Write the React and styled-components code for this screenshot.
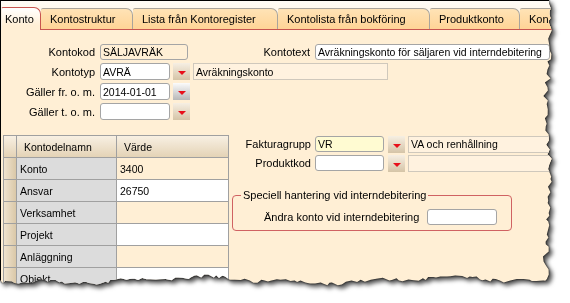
import React from 'react';
import styled, { createGlobalStyle, css } from 'styled-components';

const Global = createGlobalStyle`
  html, body { margin: 0; padding: 0; background: #fff; }
  body { width: 570px; height: 303px; overflow: hidden; font-family: "Liberation Sans", Arial, sans-serif; }
  * { box-sizing: border-box; }
`;

function rng(seed) {
  return () => {
    seed |= 0; seed = (seed + 0x6d2b79f5) | 0;
    let t = Math.imul(seed ^ (seed >>> 15), 1 | seed);
    t = (t + Math.imul(t ^ (t >>> 7), 61 | t)) ^ t;
    return ((t ^ (t >>> 14)) >>> 0) / 4294967296;
  };
}

function tornPolygon() {
  const r = rng(11);
  const pts = ['0px 0px', '549px 0px'];
  let y = 0;
  while (y < 276) {
    y += 2 + r() * 4;
    const x = 546.5 + r() * 4.5 + 1.5 * Math.sin(y / 23) + (r() < 0.12 ? -2.5 : 0);
    pts.push(`${x.toFixed(1)}px ${Math.min(y, 279).toFixed(1)}px`);
  }
  let x = 548;
  while (x > 0) {
    x -= 2 + r() * 5;
    const base = 280 + 2.5 * Math.sin(x / 41) + 1.5 * Math.sin(x / 13 + 1);
    const yy = base + (r() - 0.5) * 3.5;
    pts.push(`${Math.max(x, 0).toFixed(1)}px ${yy.toFixed(1)}px`);
  }
  pts.push('0px 281px');
  return `polygon(${pts.join(', ')})`;
}

const TORN = tornPolygon();

const Shadow = styled.div`
  width: 570px;
  height: 303px;
  filter: drop-shadow(0 0 0.8px rgba(0, 0, 0, 1)) drop-shadow(3px 3px 2px rgba(0, 0, 0, 0.68));
`;

const Window = styled.div`
  width: 570px;
  height: 300px;
  border-left: 1px solid #000;
  border-top: 1px solid #000;
  background: #ffefd5;
  clip-path: ${TORN};
  overflow: hidden;
  font-family: "Liberation Sans", Arial, sans-serif;
  font-size: 11px;
  color: #000;
`;

const TabStrip = styled.div`
  display: flex;
  align-items: flex-end;
  height: 29px;
  border-bottom: 1px solid #c8554f;
  background: linear-gradient(#fffcf6, #feefd8);
`;

const Tab = styled.div`
  flex: none;
  width: ${(p) => p.$w}px;
  height: 21px;
  padding-left: 9px;
  display: flex;
  align-items: center;
  white-space: nowrap;
  overflow: hidden;
  font-size: 11px;
  background: linear-gradient(#ffe3b6, #ffd496);
  border-top: 1px solid #a9a49c;
  border-right: 1px solid #a9a49c;
  border-radius: 2px 7px 0 0;
  ${(p) =>
    p.$active &&
    css`
      height: 23px;
      margin-bottom: -1px;
      padding-left: 3px;
      background: linear-gradient(#ffffff, #ffefd5 80%);
      border-top-color: #c8554f;
      border-right-color: #c8554f;
      border-left: 1px solid #f6eee2;
    `}
`;

const Panel = styled.div`
  padding-top: 14px;
`;

const TopForm = styled.div`
  display: flex;
  flex-direction: column;
  gap: 3px;
`;

const Row = styled.div`
  display: flex;
  align-items: center;
  height: ${(p) => p.$h || 17}px;
  padding-left: ${(p) => p.$pl || 0}px;
`;

const Label = styled.span`
  flex: none;
  width: ${(p) => (p.$w ? `${p.$w}px` : 'auto')};
  margin-right: ${(p) => (p.$gap ?? 5)}px;
  text-align: right;
  white-space: nowrap;
  font-size: 11px;
`;

const TextBox = styled.div`
  flex: none;
  width: ${(p) => p.$w}px;
  height: ${(p) => p.$h || 17}px;
  border: 1px solid #a5a5a5;
  border-radius: 3px;
  background: ${(p) => p.$bg || '#fff'};
  padding: 0 2px;
  display: flex;
  align-items: center;
  font-size: 10.5px;
  white-space: nowrap;
  overflow: hidden;
`;

const ReadOnly = styled.div`
  flex: none;
  width: ${(p) => p.$w}px;
  height: 17px;
  border: 1px solid #cfc8bc;
  background: #fff2df;
  padding: 0 2px;
  display: flex;
  align-items: center;
  font-size: 10.5px;
  white-space: nowrap;
  overflow: hidden;
`;

const DropButton = styled.div`
  flex: none;
  width: 17px;
  height: 17px;
  margin-left: ${(p) => p.$ml ?? 3}px;
  margin-right: 3px;
  display: flex;
  justify-content: center;
  align-items: center;
  padding-top: 3px;
  background: ${(p) =>
    p.$hover ? 'linear-gradient(#fbfbfb, #b8b8b8)' : 'linear-gradient(#f6efe3, #d5c4a7)'};
  &::after {
    content: '';
    border-left: 4px solid transparent;
    border-right: 4px solid transparent;
    border-top: 4px solid #e8101a;
  }
`;

const Lower = styled.div`
  display: flex;
  align-items: flex-start;
  margin-top: 15px;
  padding-left: 2px;
`;

const DataGrid = styled.div`
  flex: none;
  display: grid;
  grid-template-columns: 12px 99px 111px;
  grid-auto-rows: 21px;
  gap: 1px;
  background: #a0a0a0;
  border: 1px solid #a0a0a0;
`;

const cellBg = {
  corner: 'linear-gradient(#f8f0e3, #e4d3b6)',
  head: 'linear-gradient(#f8f0e3, #e4d3b6)',
  rowhead: 'linear-gradient(to right, #efe3cf, #dac8a8)',
  name: '#dcdcdc',
  value: '#ffefd5',
  valueAlt: '#ffffff',
};

const Cell = styled.div`
  display: flex;
  align-items: center;
  padding-left: ${(p) => (p.$kind === 'head' ? 7 : p.$kind === 'corner' || p.$kind === 'rowhead' ? 0 : 3)}px;
  font-size: 10.5px;
  white-space: nowrap;
  overflow: hidden;
  background: ${(p) => cellBg[p.$kind]};
`;

const RightSide = styled.div`
  display: flex;
  flex-direction: column;
  gap: 3px;
  margin-left: 3px;
  margin-top: 1px;
`;

const GroupBox = styled.fieldset`
  margin: 15px 0 0;
  width: 280px;
  border: 1px solid #d06262;
  border-radius: 4px;
  padding: 7px 0 5px 8px;
  min-width: 0;
`;

const Legend = styled.legend`
  padding: 0 2px;
  font-size: 11px;
  line-height: 13px;
`;

const gridRows = [
  ['Konto', '3400'],
  ['Ansvar', '26750'],
  ['Verksamhet', ''],
  ['Projekt', ''],
  ['Anläggning', ''],
  ['Objekt', ''],
];

const tabs = [
  ['Kontostruktur', 92],
  ['Lista från Kontoregister', 145],
  ['Kontolista från bokföring', 152],
  ['Produktkonto', 90],
  ['Kon', 40],
];

export default function App() {
  return (
    <>
      <Global />
      <Shadow>
        <Window>
          <TabStrip>
            <Tab $active $w={40}>Konto</Tab>
            {tabs.map(([t, w]) => (
              <Tab key={t} $w={w}>{t}</Tab>
            ))}
          </TabStrip>
          <Panel>
            <TopForm>
              <Row $h={16}>
                <Label $w={94}>Kontokod</Label>
                <TextBox $w={88} $h={16} $bg="#ffefd5">SÄLJAVRÄK</TextBox>
                <Label $w={122}>Kontotext</Label>
                <TextBox $w={235} $h={16}>Avräkningskonto för säljaren vid interndebitering</TextBox>
              </Row>
              <Row>
                <Label $w={94}>Kontotyp</Label>
                <TextBox $w={70}>AVRÄ</TextBox>
                <DropButton />
                <ReadOnly $w={195}>Avräkningskonto</ReadOnly>
              </Row>
              <Row>
                <Label $w={94}>Gäller fr. o. m.</Label>
                <TextBox $w={70}>2014-01-01</TextBox>
                <DropButton $hover />
              </Row>
              <Row>
                <Label $w={94}>Gäller t. o. m.</Label>
                <TextBox $w={70} />
                <DropButton />
              </Row>
            </TopForm>
            <Lower>
              <DataGrid>
                <Cell $kind="corner" />
                <Cell $kind="head">Kontodelnamn</Cell>
                <Cell $kind="head">Värde</Cell>
                {gridRows.map(([n, v], i) => (
                  <React.Fragment key={n}>
                    <Cell $kind="rowhead" />
                    <Cell $kind="name">{n}</Cell>
                    <Cell $kind={i % 2 ? 'valueAlt' : 'value'}>{v}</Cell>
                  </React.Fragment>
                ))}
              </DataGrid>
              <RightSide>
                <Row $h={16}>
                  <Label $w={79} $gap={4}>Fakturagrupp</Label>
                  <TextBox $w={69} $h={16} $bg="#fffbd2">VR</TextBox>
                  <DropButton $ml={4} />
                  <ReadOnly $w={160}>VA och renhållning</ReadOnly>
                </Row>
                <Row $h={16}>
                  <Label $w={79} $gap={4}>Produktkod</Label>
                  <TextBox $w={69} $h={16} />
                  <DropButton $ml={4} />
                  <ReadOnly $w={160} />
                </Row>
                <GroupBox>
                  <Legend>Speciell hantering vid interndebitering</Legend>
                  <Row $h={16} $pl={23}>
                    <Label $gap={8}>Ändra konto vid interndebitering</Label>
                    <TextBox $w={70} $h={16} />
                  </Row>
                </GroupBox>
              </RightSide>
            </Lower>
          </Panel>
        </Window>
      </Shadow>
    </>
  );
}
